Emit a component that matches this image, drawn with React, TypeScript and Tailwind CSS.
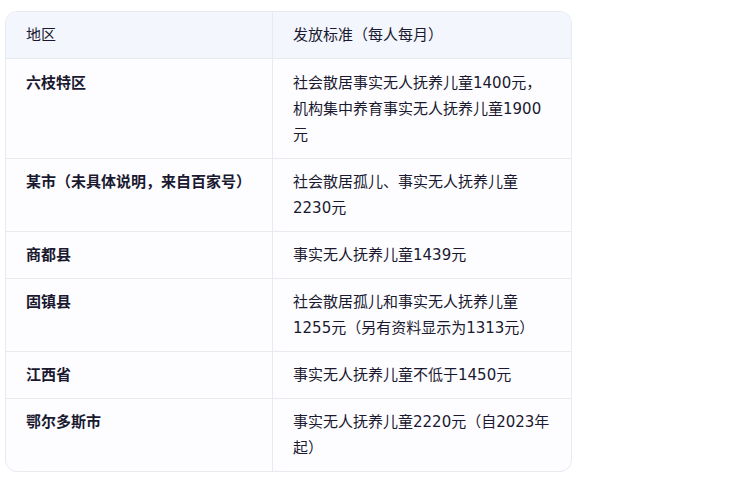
const rows: { region: string; amount: string }[] = [
  { region: '六枝特区', amount: '社会散居事实无人抚养儿童1400元，机构集中养育事实无人抚养儿童1900元' },
  { region: '某市（未具体说明，来自百家号）', amount: '社会散居孤儿、事实无人抚养儿童2230元' },
  { region: '商都县', amount: '事实无人抚养儿童1439元' },
  { region: '固镇县', amount: '社会散居孤儿和事实无人抚养儿童1255元（另有资料显示为1313元）' },
  { region: '江西省', amount: '事实无人抚养儿童不低于1450元' },
  { region: '鄂尔多斯市', amount: '事实无人抚养儿童2220元（自2023年起）' },
];

export default function App() {
  return (
    <div
      className="min-h-screen bg-white pl-[5px] pt-[11px] text-[15px] leading-[26px] text-[#1a1930]"
      style={{ fontFamily: '"DejaVu Sans", "Noto Sans CJK SC", sans-serif' }}
    >
      <div className="w-[567px] overflow-hidden rounded-xl border border-[#e8eaf0] bg-[#fdfdff]">
        {/* Header */}
        <div className="grid grid-cols-[266px_1fr] bg-[#f3f6fd]">
          <div className="px-5 py-[10px]">地区</div>
          <div className="border-l border-[#e8eaf0] px-5 py-[10px]">发放标准（每人每月）</div>
        </div>

        {rows.map((row, i) => (
          <div key={row.region} className="grid grid-cols-[266px_1fr] border-t border-[#e8eaf0]">
            <div className={`px-5 font-bold ${i === 0 ? 'py-[10.5px]' : 'py-[10px]'}`}>{row.region}</div>
            <div className={`border-l border-[#e8eaf0] px-5 ${i === 0 ? 'py-[10.5px]' : 'py-[10px]'}`}>{row.amount}</div>
          </div>
        ))}
      </div>
    </div>
  );
}
